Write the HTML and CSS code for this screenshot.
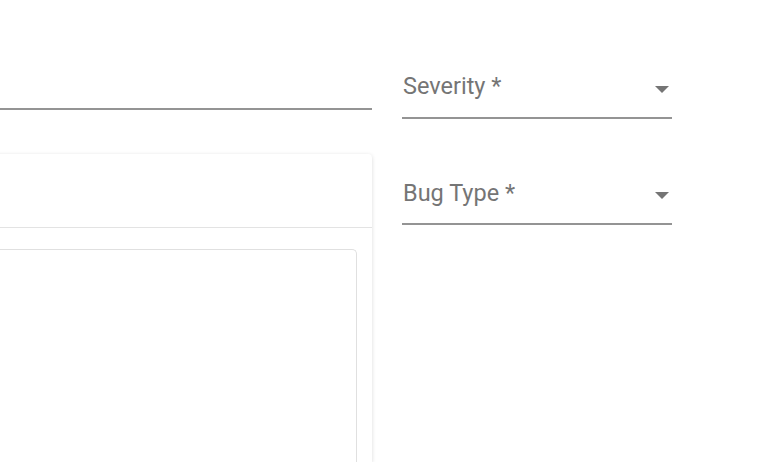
FILE: index.html
```html
<!DOCTYPE html>
<html lang="en">
<head>
<meta charset="utf-8">
<title>Bug report</title>
<link rel="stylesheet" href="styles.css">
</head>
<body>
<div class="page">
  <div class="main">
    <div class="text-field"></div>
    <div class="card">
      <div class="card-header"></div>
      <div class="card-body">
        <div class="editor"></div>
      </div>
    </div>
  </div>
  <div class="side">
    <div class="select">
      <span class="select-label">Severity *</span>
      <svg class="select-arrow" width="14" height="7" viewBox="0 0 14 7"><path d="M0 0h14L7 7z" fill="#757575"/></svg>
    </div>
    <div class="select select-second">
      <span class="select-label">Bug Type *</span>
      <svg class="select-arrow" width="14" height="7" viewBox="0 0 14 7"><path d="M0 0h14L7 7z" fill="#757575"/></svg>
    </div>
  </div>
</div>
</body>
</html>
```

FILE: styles.css
```css
html, body {
  margin: 0;
  padding: 0;
  background: #ffffff;
  overflow: hidden;
  font-family: Roboto, "Noto Sans", "Liberation Sans", sans-serif;
}

.page {
  display: flex;
  gap: 30px;
  height: 462px;
  overflow: hidden;
}

.main {
  width: 372px;
  flex: none;
  display: flex;
  flex-direction: column;
}

.text-field {
  height: 108px;
  border-bottom: 2px solid #949494;
}

.card {
  margin-top: 44px;
  margin-left: -20px;
  flex: 1;
  background: #fff;
  border-radius: 4px 4px 0 0;
  box-shadow: 0 1px 4px rgba(0, 0, 0, 0.14), 0 1px 1px rgba(0, 0, 0, 0.06);
  display: flex;
  flex-direction: column;
}

.card-header {
  height: 73px;
  border-bottom: 1px solid #e3e3e3;
}

.card-body {
  flex: 1;
  padding: 21px 15px 0 0;
  display: flex;
}

.editor {
  flex: 1;
  border: 1px solid #e0e0e0;
  border-bottom: none;
  border-radius: 5px 5px 0 0;
  margin-left: -10px;
}

.side {
  width: 270px;
  flex: none;
  display: flex;
  flex-direction: column;
}

.select {
  margin-top: 71px;
  height: 46px;
  border-bottom: 2px solid #949494;
  display: flex;
  align-items: flex-start;
  justify-content: space-between;
}

.select-second {
  margin-top: 58px;
}

.select-label {
  font-size: 23.5px;
  line-height: 30px;
  color: #757575;
  padding-left: 1px;
}

.select-second .select-label {
  padding-top: 1px;
}

.select-arrow {
  margin-top: 15px;
  margin-right: 3px;
}
```
